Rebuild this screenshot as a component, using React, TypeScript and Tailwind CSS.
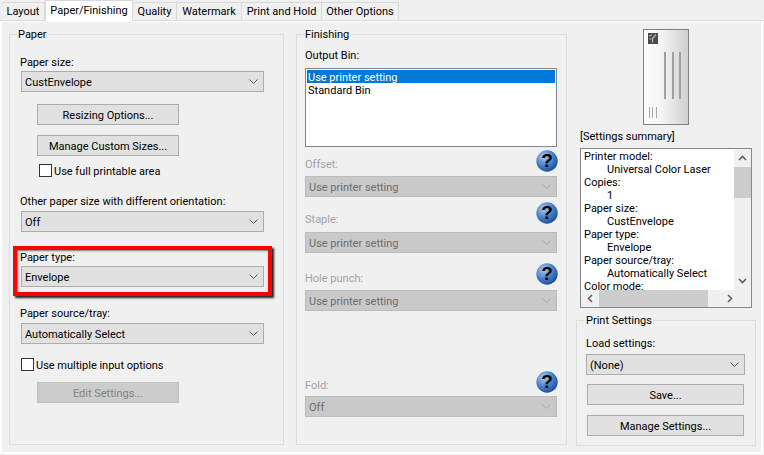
import React from 'react'

const ChevronDown = ({ light }: { light?: boolean }) => (
    <svg width="9" height="5" viewBox="0 0 9 5" fill="none" className="shrink-0">
        <path d="M0.5 0.5 L4.5 4.5 L8.5 0.5" stroke={light ? '#a8a8a8' : '#555555'} strokeWidth="1" />
    </svg>
)

const Select = ({ value, disabled, className }: { value: string; disabled?: boolean; className: string }) => (
    <div
        className={
            disabled
                ? `h-[21px] flex items-center justify-between pl-[3px] pr-[5px] border border-[#bcbcbc] bg-[#c9c9c9] text-[#6d6d6d] ${className}`
                : `h-[21px] flex items-center justify-between pl-[3px] pr-[5px] border border-[#adadad] bg-[#e1e1e1] ${className}`
        }
    >
        <span className="pt-[2px]">{value}</span>
        <ChevronDown light={disabled} />
    </div>
)

const Button = ({ label, disabled, className }: { label: string; disabled?: boolean; className: string }) => (
    <div
        className={
            disabled
                ? `h-[21px] flex items-center justify-center pt-[2px] border border-[#bfbfbf] bg-[#cccccc] text-[#838383] ${className}`
                : `h-[21px] flex items-center justify-center pt-[2px] border border-[#adadad] bg-[#e1e1e1] ${className}`
        }
    >
        {label}
    </div>
)

const Checkbox = ({ label, className }: { label: string; className: string }) => (
    <div className={`h-[13px] flex items-center gap-[2px] ${className}`}>
        <div className="w-[13px] h-[13px] border border-[#333333] bg-white" />
        <span className="pt-[2px]">{label}</span>
    </div>
)

const HelpIcon = ({ className }: { className: string }) => (
    <svg width="22" height="22" viewBox="0 0 22 22" className={`shrink-0 ${className}`}>
        <defs>
            <radialGradient id="helpBall" cx="35%" cy="30%" r="75%">
                <stop offset="0%" stopColor="#a9c8ee" />
                <stop offset="55%" stopColor="#4a82c9" />
                <stop offset="100%" stopColor="#1b4c95" />
            </radialGradient>
        </defs>
        <circle cx="11" cy="11" r="10.7" fill="url(#helpBall)" />
        <text x="11" y="17" textAnchor="middle" fontSize="19" fontWeight="700" fontFamily="Liberation Sans, sans-serif" fill="#000000">?</text>
    </svg>
)

const DisabledField = ({ label, value, top, labelLift, iconLift }: { label: string; value: string; top: string; labelLift: string; iconLift: string }) => (
    <div className={top}>
        <div className="flex items-end justify-between h-[22px] -mr-[1px]">
            <span className={`text-[#a3a3a3] leading-[14px] ${labelLift}`}>{label}</span>
            <HelpIcon className={iconLift} />
        </div>
        <Select value={value} disabled className="mt-[4px]" />
    </div>
)

const Preview = () => (
    <svg width="46" height="96" viewBox="0 0 46 96" className="block">
        <defs>
            <linearGradient id="sheet" x1="0" x2="1" y1="0" y2="0">
                <stop offset="0%" stopColor="#ffffff" />
                <stop offset="45%" stopColor="#f2f2f2" />
                <stop offset="100%" stopColor="#cfcfcf" />
            </linearGradient>
        </defs>
        <rect x="0.5" y="0.5" width="45" height="95" fill="url(#sheet)" stroke="#7f7f7f" />
        <rect x="5" y="4" width="10" height="11" fill="#4a4a4a" />
        <path d="M6 7 L9 6 M13 5.5 L9.5 9.5 L9.5 13.5 M6.5 10 L8.5 10" stroke="#b5b5b5" strokeWidth="1.2" fill="none" />
        <rect x="21" y="23" width="2" height="47" fill="#a0a0a0" />
        <rect x="29" y="23" width="2" height="47" fill="#a0a0a0" />
        <rect x="36" y="23" width="2" height="47" fill="#a0a0a0" />
        <rect x="6" y="78" width="1" height="11" fill="#a8a8a8" />
        <rect x="9" y="78" width="1" height="11" fill="#a8a8a8" />
        <rect x="13" y="78" width="1" height="11" fill="#a8a8a8" />
    </svg>
)

const summary: [string, boolean][] = [
    ['Printer model:', false],
    ['Universal Color Laser', true],
    ['Copies:', false],
    ['1', true],
    ['Paper size:', false],
    ['CustEnvelope', true],
    ['Paper type:', false],
    ['Envelope', true],
    ['Paper source/tray:', false],
    ['Automatically Select', true],
    ['Color mode:', false],
]

const tabs = ['Layout', 'Paper/Finishing', 'Quality', 'Watermark', 'Print and Hold', 'Other Options']
const tabWidths = ['w-[43px]', 'w-[88px]', 'w-[44px]', 'w-[65px]', 'w-[80px]', 'w-[77px]']

const App = () => {
    return (
        <div className="relative w-[764px] h-[455px] overflow-hidden bg-[#f0f0f0] text-[11px] leading-[14px] text-black font-['Roboto',sans-serif]">
            <div className="h-[21px] flex items-end pl-[2px] border-b border-[#d9d9d9]">
                {tabs.map((t, i) =>
                    t === 'Paper/Finishing' ? (
                        <div key={t} className={`${tabWidths[i]} h-[21px] -mb-px bg-white border-x border-t border-[#d9d9d9] flex items-center justify-center z-10 whitespace-nowrap`}>
                            {t}
                        </div>
                    ) : (
                        <div key={t} className={`${tabWidths[i]} h-[18px] border-t border-r border-[#d9d9d9] flex items-center justify-center pt-[1px] whitespace-nowrap`}>
                            {t}
                        </div>
                    )
                )}
            </div>
            <div className="w-[763px] h-[433px] border-x-[2px] border-b-[2px] border-t border-white flex pl-[7px]">
                {/* Paper */}
                <fieldset className="w-[275px] h-[418px] mt-[5px] border border-[#dcdcdc] pl-[10px] pr-[19px]">
                    <legend className="-ml-[3px] px-[1px] pt-[1px]">Paper</legend>
                    <div className="mt-[14px]">Paper size:</div>
                    <Select value="CustEnvelope" className="mt-[1px] ml-[1px]" />
                    <Button label="Resizing Options..." className="mt-[12px] ml-[17px] w-[142px]" />
                    <Button label="Manage Custom Sizes..." className="mt-[10px] ml-[17px] w-[142px]" />
                    <Checkbox label="Use full printable area" className="mt-[8px] ml-[19px]" />
                    <div className="mt-[18px]">Other paper size with different orientation:</div>
                    <Select value="Off" className="mt-[2px] ml-[1px]" />
                    <div className="mt-[19px]">Paper type:</div>
                    <Select value="Envelope" className="mt-[1px] ml-[1px]" />
                    <div className="mt-[20px]">Paper source/tray:</div>
                    <Select value="Automatically Select" className="mt-[2px] ml-[1px]" />
                    <Checkbox label="Use multiple input options" className="mt-[14px] ml-[1px]" />
                    <Button label="Edit Settings..." disabled className="mt-[11px] ml-[17px] w-[142px]" />
                </fieldset>

                {/* Finishing */}
                <fieldset className="w-[271px] h-[418px] mt-[5px] ml-[12px] border border-[#dcdcdc] pl-[8px] pr-[9px]">
                    <legend className="-ml-[1px] px-[1px] pt-[1px]">Finishing</legend>
                    <div className="mt-[7px]">Output Bin:</div>
                    <div className="mt-[5px] h-[79px] border border-[#828790] bg-white p-[1px]">
                        <div className="h-[13px] leading-[15px] bg-[#0078d7] text-white pl-[1px]">Use printer setting</div>
                        <div className="h-[13px] leading-[15px] pl-[1px]">Standard Bin</div>
                    </div>
                    <DisabledField label="Offset:" value="Use printer setting" top="mt-[3px]" labelLift="" iconLift="mb-0" />
                    <DisabledField label="Staple:" value="Use printer setting" top="mt-[9px]" labelLift="mb-[1px]" iconLift="mb-[4px]" />
                    <DisabledField label="Hole punch:" value="Use printer setting" top="mt-[11px]" labelLift="" iconLift="mb-[1px]" />
                    <DisabledField label="Fold:" value="Off" top="mt-[59px]" labelLift="-mb-[1px]" iconLift="-mb-[1px]" />
                </fieldset>

                {/* Right column */}
                <div className="w-[180px] ml-[9px] flex flex-col">
                    <div className="flex justify-center pt-[7px]">
                        <Preview />
                    </div>
                    <div className="mt-[5px] ml-[4px]">[Settings summary]</div>
                    <div className="mt-[4px] ml-[4px] w-[172px] h-[160px] border border-[#828790] bg-white flex flex-col">
                        <div className="h-[141px] flex">
                            <div className="flex-1 overflow-hidden pl-[3px] pt-[1px] leading-[13px]">
                                {summary.map(([text, indent]) => (
                                    <div key={text} className={indent ? 'pl-[23px]' : ''}>{text}</div>
                                ))}
                            </div>
                            <div className="w-[17px] bg-[#f0f0f0] flex flex-col items-center">
                                <div className="h-[18px] flex items-center justify-center">
                                    <svg width="9" height="6" viewBox="0 0 9 6" fill="none"><path d="M1 5 L4.5 1.5 L8 5" stroke="#606060" strokeWidth="1.6" /></svg>
                                </div>
                                <div className="w-full h-[31px] bg-[#cdcdcd]" />
                                <div className="flex-1" />
                                <div className="h-[18px] flex items-center justify-center">
                                    <svg width="9" height="6" viewBox="0 0 9 6" fill="none"><path d="M1 1 L4.5 4.5 L8 1" stroke="#606060" strokeWidth="1.6" /></svg>
                                </div>
                            </div>
                        </div>
                        <div className="h-[17px] bg-[#f0f0f0] flex items-center">
                            <div className="w-[18px] flex justify-center">
                                <svg width="6" height="9" viewBox="0 0 6 9" fill="none"><path d="M5 1 L1.5 4.5 L5 8" stroke="#606060" strokeWidth="1.6" /></svg>
                            </div>
                            <div className="w-[109px] h-full bg-[#cdcdcd]" />
                            <div className="flex-1 flex justify-center">
                                <svg width="6" height="9" viewBox="0 0 6 9" fill="none"><path d="M1 1 L4.5 4.5 L1 8" stroke="#606060" strokeWidth="1.6" /></svg>
                            </div>
                        </div>
                    </div>
                    <fieldset className="mt-[5px] h-[133px] border border-[#dcdcdc] pl-[9px] pr-[10px]">
                        <legend className="-ml-[1px] px-[1px] pt-[1px]">Print Settings</legend>
                        <div className="mt-[9px]">Load settings:</div>
                        <Select value="(None)" className="mt-[3px]" />
                        <Button label="Save..." className="mt-[9px] mx-[1px]" />
                        <Button label="Manage Settings..." className="mt-[10px] mx-[1px]" />
                    </fieldset>
                </div>
            </div>

            {/* red callout round the paper type field */}
            <div className="absolute left-[13px] top-[246px] w-[259px] h-[50px] border-[4px] border-[#ff0000] shadow-[2px_2px_2px_#222222,inset_1px_1px_2px_#00000080]" />
        </div>
    )
}

export default App
